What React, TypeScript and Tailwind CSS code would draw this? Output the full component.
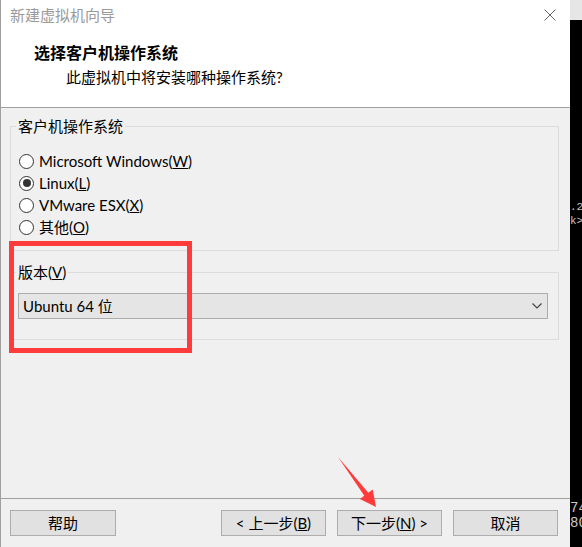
import React from "react";

function Radio({ checked, children }: { checked?: boolean; children: React.ReactNode }) {
  return (
    <div className="flex items-center h-[22px] gap-[5px]">
      <div className="w-[15px] h-[15px] rounded-full border border-[#333333] bg-white flex items-center justify-center">
        {checked && <div className="w-[8px] h-[8px] rounded-full bg-[#333333]" />}
      </div>
      <span className="text-[15px] leading-[22px] text-black">{children}</span>
    </div>
  );
}

function Btn({ children, w }: { children: React.ReactNode; w: string }) {
  return (
    <div
      className={`${w} h-[26px] border border-[#adadad] bg-[#e1e1e1] flex items-center justify-center text-[15px] leading-[20px] text-black`}
    >
      {children}
    </div>
  );
}

export default function App() {
  return (
    <div className="relative flex w-[582px] h-[547px] overflow-hidden bg-black font-['Lato','Noto_Sans_CJK_SC',sans-serif]">
      {/* Dialog */}
      <div className="flex flex-col w-[570px] h-[547px] border-l border-[#a0a0a0] bg-[#f0f0f0]">
        {/* Header */}
        <div className="h-[108px] bg-white border-b border-[#a0a0a0] flex flex-col">
          <div className="h-[30px] flex items-center justify-between pl-[9px] pr-[14px]">
            <span className="text-[15px] leading-[30px] text-[#9a9a9a]">新建虚拟机向导</span>
            <svg width="12" height="12" viewBox="0 0 12 12">
              <path d="M0.5 0.5 L11.5 11.5 M11.5 0.5 L0.5 11.5" stroke="#666" strokeWidth="1" fill="none" />
            </svg>
          </div>
          <div className="mt-[13px] pl-[33px] text-[16px] leading-[20px] font-bold text-black">选择客户机操作系统</div>
          <div className="mt-[4px] pl-[65px] text-[15px] leading-[20px] text-black">此虚拟机中将安装哪种操作系统?</div>
        </div>

        {/* Body */}
        <div className="h-[390px] pt-[18px] pl-[9px]">
          <div className="relative w-[549px] h-[125px] border border-[#dcdcdc]">
            <span className="absolute left-[5px] top-[-11px] px-[2px] bg-[#f0f0f0] text-[15px] leading-[20px] text-black">
              客户机操作系统
            </span>
            <div className="pt-[23px] pl-[8px] flex flex-col">
              <Radio>
                Microsoft Windows(<span className="underline">W</span>)
              </Radio>
              <Radio checked>
                Linux(<span className="underline">L</span>)
              </Radio>
              <Radio>
                VMware ESX(<span className="underline">X</span>)
              </Radio>
              <Radio>
                其他(<span className="underline">O</span>)
              </Radio>
            </div>
          </div>

          <div className="relative mt-[21px] w-[549px] h-[68px] border border-[#dcdcdc]">
            <span className="absolute left-[5px] top-[-11px] px-[2px] bg-[#f0f0f0] text-[15px] leading-[20px] text-black">
              版本(<span className="underline">V</span>)
            </span>
            <div className="mt-[20px] ml-[7px] w-[530px] h-[26px] border border-[#adadad] bg-[#e5e5e5] flex items-center justify-between pl-[4px] pr-[5px]">
              <span className="text-[15px] leading-[20px] text-black">Ubuntu 64 位</span>
              <svg width="10" height="6" viewBox="0 0 10 6">
                <path d="M0.5 0.5 L5 5 L9.5 0.5" stroke="#444" strokeWidth="1.2" fill="none" />
              </svg>
            </div>
          </div>
        </div>

        {/* Footer */}
        <div className="h-[49px] border-t border-[#a0a0a0] pt-[11px] pl-[9px] pr-[12px] flex items-start justify-between">
          <Btn w="w-[106px]">帮助</Btn>
          <div className="flex gap-[11px]">
            <Btn w="w-[105px]">
              &lt; 上一步(<span className="underline">B</span>)
            </Btn>
            <Btn w="w-[105px]">
              下一步(<span className="underline">N</span>) &gt;
            </Btn>
            <Btn w="w-[105px]">取消</Btn>
          </div>
        </div>
      </div>

      {/* Terminal strip */}
      <div className="w-[12px] h-[547px] flex flex-col bg-black overflow-hidden whitespace-nowrap font-['Liberation_Mono',monospace]">
        <div className="h-[20px] bg-[#e6e6e6]" />
        <div className="mt-[180px] text-[11px] leading-[14px] text-[#c0c0c0]">.2</div>
        <div className="text-[11px] leading-[14px] text-[#c0c0c0]">k&gt;</div>
        <div className="mt-[273px] text-[14px] leading-[15px] text-[#c8c8c8]">74</div>
        <div className="text-[14px] leading-[15px] text-[#c8c8c8]">80</div>
      </div>

      {/* Red annotation box */}
      <div className="absolute left-[9px] top-[241px] w-[183px] h-[112px] border-[5px] border-[#ff3b3b]" />

      {/* Red arrow */}
      <svg className="absolute left-0 top-0" width="582" height="547" viewBox="0 0 582 547">
        <polygon
          points="338,457 368.3,492.8 372.7,489.5 376,507 359.9,499.1 364.3,495.8"
          fill="#ff3b3b"
        />
      </svg>
    </div>
  );
}
